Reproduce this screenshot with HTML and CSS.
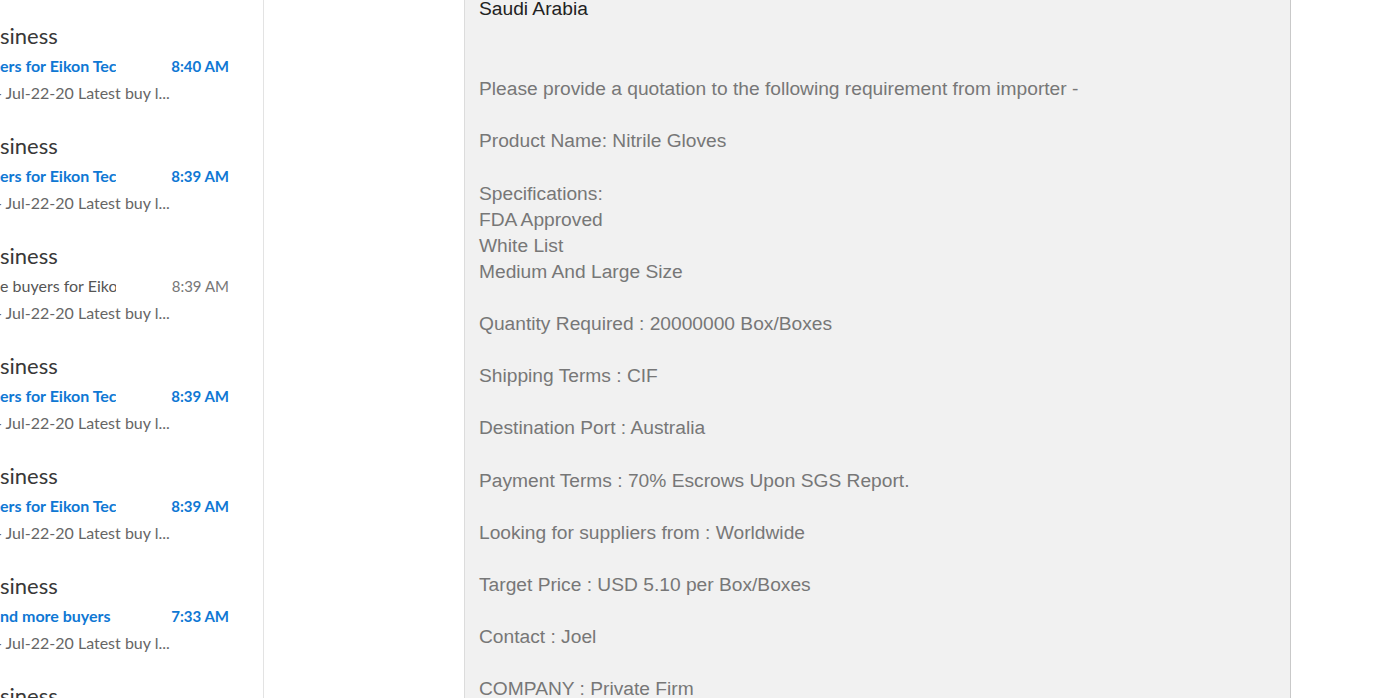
FILE: index.html
```html
<!DOCTYPE html>
<html>
<head>
<meta charset="utf-8">
<link rel="stylesheet" href="styles.css">
</head>
<body>
<div class="app">
  <aside class="list">
    <div class="item unread">
      <div class="sender">siness</div>
      <div class="row"><span class="subject">ers for Eikon Tec</span><span class="time">8:40 AM</span></div>
      <div class="preview">- Jul-22-20 Latest buy l...</div>
    </div>
    <div class="item unread">
      <div class="sender">siness</div>
      <div class="row"><span class="subject">ers for Eikon Tec</span><span class="time">8:39 AM</span></div>
      <div class="preview">- Jul-22-20 Latest buy l...</div>
    </div>
    <div class="item">
      <div class="sender">siness</div>
      <div class="row"><span class="subject">e buyers for Eiko</span><span class="time">8:39 AM</span></div>
      <div class="preview">- Jul-22-20 Latest buy l...</div>
    </div>
    <div class="item unread">
      <div class="sender">siness</div>
      <div class="row"><span class="subject">ers for Eikon Tec</span><span class="time">8:39 AM</span></div>
      <div class="preview">- Jul-22-20 Latest buy l...</div>
    </div>
    <div class="item unread">
      <div class="sender">siness</div>
      <div class="row"><span class="subject">ers for Eikon Tec</span><span class="time">8:39 AM</span></div>
      <div class="preview">- Jul-22-20 Latest buy l...</div>
    </div>
    <div class="item unread">
      <div class="sender">siness</div>
      <div class="row"><span class="subject">nd more buyers</span><span class="time">7:33 AM</span></div>
      <div class="preview">- Jul-22-20 Latest buy l...</div>
    </div>
    <div class="item unread">
      <div class="sender">siness</div>
      <div class="row"><span class="subject">ers for Eikon Tec</span><span class="time">7:30 AM</span></div>
      <div class="preview">- Jul-22-20 Latest buy l...</div>
    </div>
  </aside>
  <main class="reading">
    <div class="mail">
      <p class="line dark">Saudi Arabia</p>
      <p class="line">&nbsp;</p>
      <p class="line gap2">Please provide a quotation to the following requirement from importer -</p>
      <p class="line">&nbsp;</p>
      <p class="line">Product Name: Nitrile Gloves</p>
      <p class="line">&nbsp;</p>
      <p class="line">Specifications:</p>
      <p class="line">FDA Approved</p>
      <p class="line">White List</p>
      <p class="line">Medium And Large Size</p>
      <p class="line">&nbsp;</p>
      <p class="line">Quantity Required : 20000000 Box/Boxes</p>
      <p class="line">&nbsp;</p>
      <p class="line">Shipping Terms : CIF</p>
      <p class="line">&nbsp;</p>
      <p class="line">Destination Port : Australia</p>
      <p class="line">&nbsp;</p>
      <p class="line">Payment Terms : 70% Escrows Upon SGS Report.</p>
      <p class="line">&nbsp;</p>
      <p class="line">Looking for suppliers from : Worldwide</p>
      <p class="line">&nbsp;</p>
      <p class="line">Target Price : USD 5.10 per Box/Boxes</p>
      <p class="line">&nbsp;</p>
      <p class="line">Contact : Joel</p>
      <p class="line">&nbsp;</p>
      <p class="line">COMPANY : Private Firm</p>
    </div>
  </main>
</div>
</body>
</html>
```
FILE: styles.css
```css
html, body {
  margin: 0;
  padding: 0;
  background: #ffffff;
  overflow: hidden;
}
.app {
  display: flex;
  height: 698px;
  width: 1377px;
  overflow: hidden;
}
.list {
  width: 263px;
  flex: none;
  border-right: 1px solid #e3e3e3;
  overflow: hidden;
  font-family: Lato, "Open Sans", sans-serif;
}
.item {
  height: 110px;
  box-sizing: border-box;
  padding-top: 22px;
  padding-right: 34px;
}
.sender {
  font-size: 22px;
  line-height: 28px;
  height: 28px;
  color: #383838;
  white-space: nowrap;
}
.row {
  display: flex;
  align-items: center;
  margin-top: 4px;
  height: 24px;
  font-size: 16px;
  line-height: 24px;
}
.subject {
  width: 116px;
  overflow: hidden;
  white-space: nowrap;
  color: #555555;
}
.time {
  margin-left: auto;
  font-size: 15px;
  color: #777777;
  white-space: nowrap;
}
.unread .subject,
.unread .time {
  color: #0f78d4;
  font-weight: 700;
}
.preview {
  margin-top: 4px;
  margin-left: -4px;
  font-size: 16px;
  line-height: 22px;
  color: #666666;
  white-space: nowrap;
}
.reading {
  flex: 1;
  padding-left: 200px;
}
.mail {
  width: 811px;
  height: 702px;
  background: #f1f1f1;
  border-left: 1px solid #dcdcdc;
  border-right: 1px solid #c9c9c9;
  padding-left: 14px;
  font-family: "Liberation Sans", Arial, sans-serif;
  font-size: 19.2px;
  color: #777777;
  overflow: hidden;
  margin-top: -4px;
}
.line {
  margin: 0;
  line-height: 26.09px;
  white-space: nowrap;
}
.dark {
  color: #222222;
}
.gap2 {
  margin-top: 28px;
}
```
